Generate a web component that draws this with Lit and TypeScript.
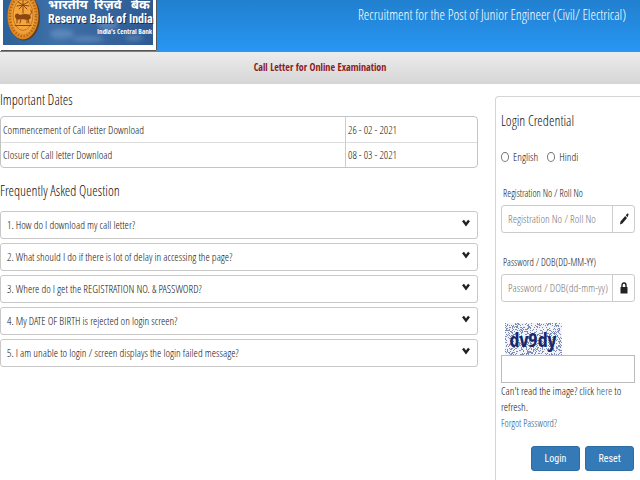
import { LitElement, html, css, svg } from "lit";
import { customElement } from "lit/decorators.js";

const questions = [
  "1. How do I download my call letter?",
  "2. What should I do if there is lot of delay in accessing the page?",
  "3. Where do I get the REGISTRATION NO. & PASSWORD?",
  "4. My DATE OF BIRTH is rejected on login screen?",
  "5. I am unable to login / screen displays the login failed message?",
];

const dates = [
  ["Commencement of Call letter Download", "26 - 02 - 2021"],
  ["Closure of Call letter Download", "08 - 03 - 2021"],
];

/* Repeatable speckle for the captcha background. */
function speckle(width: number, height: number, count: number): string {
  let seed = 17;
  const next = () => (seed = (seed * 16807) % 2147483647) / 2147483647;
  let d = "";
  for (let i = 0; i < count; i++) {
    const x = Math.floor(next() * width);
    const y = Math.floor(next() * height);
    d += `M${x} ${y}h1v1h-1z`;
  }
  return d;
}

@customElement("bank-logo")
export class BankLogo extends LitElement {
  static styles = css`
    :host { display: block; }
    svg { display: block; }
    .hindi { font: 700 13px "Noto Sans", "Liberation Sans", sans-serif; }
    .name { font: 700 12px "Roboto Condensed", "Liberation Sans", sans-serif; }
    .motto { font: 700 7px "Open Sans Condensed", "Noto Sans", sans-serif; }
  `;
  render() {
    return html`<svg width="158" height="52" viewBox="0 0 158 52" role="img" aria-label="Reserve Bank of India">
      <defs>
        <linearGradient id="sea" x1="0" y1="0" x2="1" y2="0">
          <stop offset="0" stop-color="#2c6099" />
          <stop offset=".35" stop-color="#3f70a8" />
          <stop offset="1" stop-color="#2d5a92" />
        </linearGradient>
        <radialGradient id="gold">
          <stop offset="0" stop-color="#f6ad45" />
          <stop offset=".7" stop-color="#f2a136" />
          <stop offset="1" stop-color="#d9801c" />
        </radialGradient>
        <filter id="haze" x="-20%" y="-40%" width="140%" height="180%"><feGaussianBlur stdDeviation="2" /></filter>
      </defs>
      <rect width="157" height="51" fill="#fff" />
      <path d="M1 50.5H156.500V0" fill="none" stroke="#555" />
      <rect x="3" width="150" height="45" fill="url(#sea)" />
      <g fill="#7ba3cf" opacity=".45" filter="url(#haze)">
        <ellipse cx="62" cy="34" rx="12" ry="5" />
        <ellipse cx="88" cy="39" rx="16" ry="3" />
        <ellipse cx="108" cy="24" rx="10" ry="7" />
        <ellipse cx="134" cy="38" rx="9" ry="3" />
      </g>
      <ellipse cx="24" cy="17" rx="16" ry="23.500" fill="#5d3b18" />
      <ellipse cx="23" cy="16" rx="15.500" ry="23.500" fill="url(#gold)" />
      <ellipse cx="23" cy="16" rx="13" ry="20" fill="none" stroke="#b56a20" stroke-width="2.600" stroke-dasharray="1.500 1.500" />
      <ellipse cx="23" cy="15" rx="10" ry="15.500" fill="#f4a53c" stroke="#a96522" stroke-width=".7" />
      <g stroke="#8a4712" fill="none" stroke-width="1" stroke-linecap="round">
        <path d="M23 13V5M23 5l-5-3M23 5l5-3M23 5l-6 1M23 5l6 1M23 5l-4 4M23 5l4 4M23 5V0" />
        <path d="M15 25.500H31M17 23v-4M20 23l1-4M27 23v-4M29 23l-1-4M30 15q3-2 1-5" />
      </g>
      <path d="M15 15q2-3 5 0 5-2 10 0l1 3-3 2-7-1-4 1-2-3z" fill="#8a4712" />
      <g fill="#122f55" transform="translate(1 1)" aria-hidden="true">
        <text class="name" x="48" y="23">Reserve Bank of India</text>
      </g>
      <g fill="#fff">
        <text class="hindi" x="48" y="9">भारतीय</text>
        <text class="hindi" x="94" y="9">रिज़र्व</text>
        <text class="hindi" x="131" y="9">बैंक</text>
        <text class="name" x="48" y="23">Reserve Bank of India</text>
        <text class="motto" x="97" y="34">India's Central Bank</text>
      </g>
    </svg>`;
  }
}

@customElement("captcha-picture")
export class CaptchaPicture extends LitElement {
  static styles = css`
    :host { display: block; }
    svg { display: block; }
    .code { font: 700 20px "Open Sans Condensed", "Open Sans", sans-serif; }
  `;
  render() {
    return html`<svg width="57" height="32" viewBox="0 0 57 32" role="img" aria-label="Captcha">
      <rect width="57" height="32" fill="#f1f3f9" />
      ${svg`<path d=${speckle(57, 32, 680)} fill="#7d8db6" />`}
      <text class="code" x="28" y="24" text-anchor="middle" fill="#17296b">dv9dy</text>
    </svg>`;
  }
}

@customElement("app-root")
export class AppRoot extends LitElement {
  static styles = css`
    :host {
      display: block;
      min-height: 100vh;
      background: #fff;
      color: #111;
      font: 11px/16px "Open Sans Condensed Light", "Roboto Condensed", "Liberation Sans", sans-serif;
    }
    * { box-sizing: border-box; }
    .top {
      display: flex;
      justify-content: space-between;
      height: 52px;
      background: linear-gradient(#2180cf, #2896f3);
    }
    .post { margin: 6px 14px 0 0; font-size: 14px; line-height: 18px; font-weight: 400; color: #fff; }
    .notice {
      height: 32px;
      margin: 0;
      font-family: "Open Sans Condensed", "Liberation Sans", sans-serif;
      font-size: 10px;
      line-height: 30px;
      font-weight: 700;
      text-align: center;
      color: #8b1a1f;
      background: linear-gradient(#ececec, #d6d6d6);
    }
    .page {
      display: grid;
      grid-template-columns: minmax(0, 1fr) 145px;
      gap: 17px;
      overflow: hidden;
    }
    h2 { margin: 0; font-size: 14px; line-height: 16px; font-weight: 400; }
    .left { padding-top: 8px; }
    .dates {
      width: 100%;
      margin: 8px 0 15px;
      border: 1px solid #c4c4c4;
      border-radius: 4px;
      border-spacing: 0;
      table-layout: fixed;
    }
    .dates th, .dates td { height: 25px; padding: 0 2px; text-align: left; font-weight: 400; }
    .dates td { width: 132px; border-left: 1px solid #ccc; }
    .dates tr + tr > * { border-top: 1px solid #ddd; }
    .faq { display: grid; gap: 4px; margin-top: 12px; }
    .question {
      display: flex;
      align-items: center;
      justify-content: space-between;
      height: 28px;
      padding: 0 7px 0 6px;
      border: 1px solid #c8c8c8;
      border-radius: 3px;
      background: #fff;
      color: inherit;
      font: inherit;
      text-align: left;
    }
    .question svg { display: block; margin-bottom: 4px; }
    .login {
      display: flex;
      flex-direction: column;
      margin-top: 12px;
      margin-right: -8px;
      padding: 16px 12px 9px 5px;
      border: 1px solid #d4d4d4;
      border-bottom: 0;
      border-radius: 4px 4px 0 0;
    }
    .choices { display: flex; gap: 9px; margin: 20px 0; }
    .choices label { display: flex; align-items: center; gap: 4px; }
    .choices input {
      appearance: none;
      width: 8px;
      height: 10px;
      margin: 0;
      border: 1px solid #777;
      border-radius: 50%;
    }
    .choices input:checked { background: #337ab7; }
    .caption { padding-left: 2px; font-size: 10px; }
    .field {
      display: flex;
      height: 28px;
      margin: 4px 0 21px;
      border: 1px solid #ccc;
      border-radius: 3px;
    }
    .field input {
      flex: 1;
      min-width: 0;
      padding: 0 0 0 6px;
      border: 0;
      background: none;
      font: inherit;
      color: inherit;
    }
    .field input::placeholder { color: #777; opacity: 1; }
    .addon { display: grid; place-items: center; width: 22px; border-left: 1px solid #ccc; }
    .captcha { margin-left: 4px; }
    .answer { width: 100%; height: 28px; border: 1px solid #bbb; font: inherit; }
    .hint { margin: 0; }
    a { color: #23527c; text-decoration: none; }
    .forgot { font-size: 10px; }
    .buttons { display: flex; justify-content: flex-end; gap: 5px; margin: 15px 1px 0 0; }
    .buttons button {
      width: 49px;
      height: 25px;
      padding: 0;
      border: 1px solid #2e6da4;
      border-radius: 3px;
      background: #337ab7;
      color: #fff;
      font: inherit;
      font-family: "Roboto Condensed", "Liberation Sans", sans-serif;
      font-size: 10px;
    }
  `;

  render() {
    return html`
      <header class="top">
        <bank-logo></bank-logo>
        <h1 class="post">Recruitment for the Post of Junior Engineer (Civil/ Electrical)</h1>
      </header>
      <p class="notice">Call Letter for Online Examination</p>
      <main class="page">
        <section class="left">
          <h2>Important Dates</h2>
          <table class="dates">
            <tbody>
              ${dates.map(([name, day]) => html`<tr><th scope="row">${name}</th><td>${day}</td></tr>`)}
            </tbody>
          </table>
          <h2>Frequently Asked Question</h2>
          <div class="faq">
            ${questions.map(
              (q) => html`<button class="question" type="button">
                <span>${q}</span>
                <svg width="8" height="8" viewBox="0 0 8 8" aria-hidden="true">
                  <path d="M1 1.500L4 5.500L7 1.500" fill="none" stroke="#222" stroke-width="2.400" />
                </svg>
              </button>`
            )}
          </div>
        </section>
        <form class="login">
          <h2>Login Credential</h2>
          <div class="choices">
            <label><input type="radio" name="language" />English</label>
            <label><input type="radio" name="language" />Hindi</label>
          </div>
          <label class="caption" for="reg">Registration No / Roll No</label>
          <div class="field">
            <input id="reg" type="text" placeholder="Registration No / Roll No" />
            <span class="addon">
              <svg width="10" height="12" viewBox="0 0 10 12" aria-hidden="true">
                <path d="M1 11.500l.5-3L6.200 3l1.800 2L3.400 10.500zM6.800 2.200L8 .8q.8-.6 1.300 0 .6.700 0 1.500L8.500 4.200z" fill="#222" />
              </svg>
            </span>
          </div>
          <label class="caption" for="pass">Password / DOB(DD-MM-YY)</label>
          <div class="field">
            <input id="pass" type="password" placeholder="Password / DOB(dd-mm-yy)" />
            <span class="addon">
              <svg width="8" height="12" viewBox="0 0 8 12" aria-hidden="true">
                <path d="M2 6V3.500Q2 1 4 1t2 2.500V6" fill="none" stroke="#222" stroke-width="1.400" />
                <rect x=".5" y="5" width="7" height="6.500" rx=".5" fill="#222" />
              </svg>
            </span>
          </div>
          <captcha-picture class="captcha"></captcha-picture>
          <input class="answer" type="text" aria-label="Text in the image" />
          <p class="hint">Can't read the image? click <a href="#refresh">here</a> to refresh.</p>
          <a class="forgot" href="#forgot">Forgot Password?</a>
          <div class="buttons">
            <button type="submit">Login</button>
            <button type="reset">Reset</button>
          </div>
        </form>
      </main>
    `;
  }
}
